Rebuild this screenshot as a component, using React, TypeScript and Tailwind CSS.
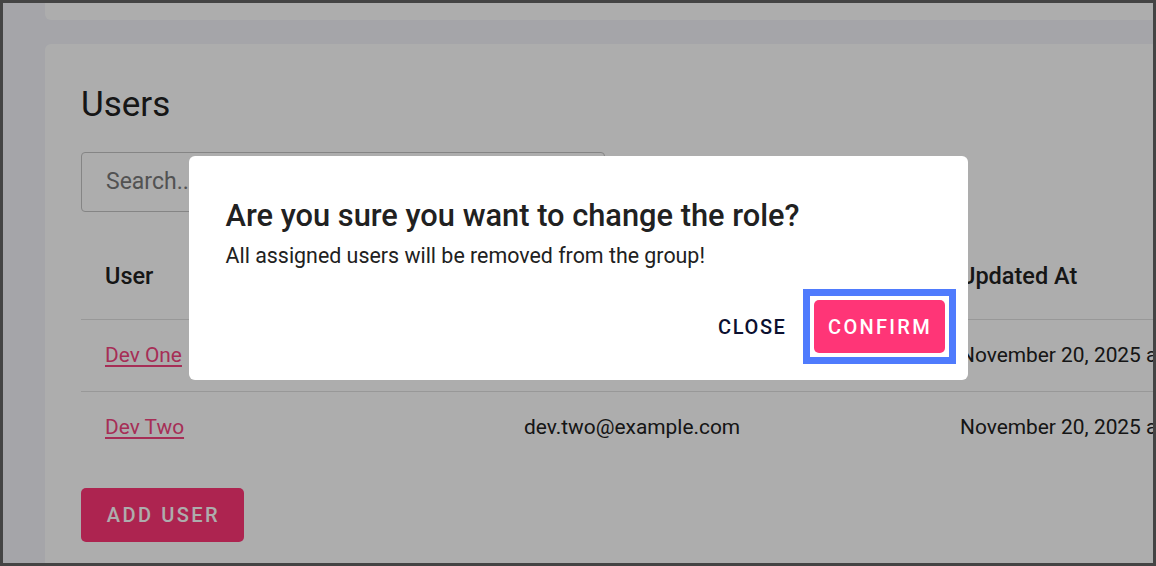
import React from "react";

export default function App() {
  return (
    <div className="relative w-[1156px] h-[566px] overflow-hidden border-[3px] border-[#444444] bg-[#f3f4fa] font-['Roboto',sans-serif] text-[#212121]">
      <div className="flex flex-col h-full pl-[42px]">
        <div className="h-[17px] shrink-0 bg-white rounded-bl-[6px]" />
        <div className="mt-[24px] flex-1 bg-white rounded-tl-[6px] pl-[36px] pt-[39px]">
          <h1 className="text-[35px] leading-[43px] font-normal">Users</h1>
          <div className="mt-[26px] w-[524px] h-[60px] rounded-[4px] border border-[#c4c4c4] flex items-center">
            <input
              className="w-full bg-transparent outline-none pl-[24px] text-[23px] placeholder:text-[#7a7a7a]"
              placeholder="Search..."
            />
          </div>
          <div className="mt-[23px] w-[1400px]">
            <div className="grid grid-cols-[419px_437px_544px] h-[85px] items-center border-b border-[#e0e0e0] text-[23.5px] font-medium">
              <div className="pl-[24px]">User</div>
              <div className="pl-[24px]">Email</div>
              <div className="pl-[23px]">Updated At</div>
            </div>
            <div className="grid grid-cols-[419px_437px_544px] h-[72px] items-center border-b border-[#e0e0e0] text-[20.9px]">
              <div className="pl-[24px]">
                <a className="text-[#f5457f] underline decoration-[1.5px] underline-offset-[3px]" href="#">Dev One</a>
              </div>
              <div className="pl-[24px]">dev.one@example.com</div>
              <div className="pl-[23px] whitespace-nowrap">November 20, 2025 at 10:15 AM</div>
            </div>
            <div className="grid grid-cols-[419px_437px_544px] h-[71px] items-center text-[20.9px]">
              <div className="pl-[24px]">
                <a className="text-[#f5457f] underline decoration-[1.5px] underline-offset-[3px]" href="#">Dev Two</a>
              </div>
              <div className="pl-[24px]">dev.two@example.com</div>
              <div className="pl-[23px] whitespace-nowrap">November 20, 2025 at 10:15 AM</div>
            </div>
          </div>
          <button className="mt-[25px] w-[163px] h-[54px] rounded-[5px] bg-[#ff3577] text-white text-[20px] font-medium tracking-[2.5px] pl-[2px]">
            ADD USER
          </button>
        </div>
      </div>

      <div className="absolute inset-0 bg-black/[0.32]" />

      <div className="absolute left-0 right-0 top-[153px] flex justify-center">
        <div className="w-[779px] h-[224px] bg-white rounded-[6px] pl-[37px] pr-[12px] pt-[41px]">
          <h2 className="text-[30.8px] leading-[38px] font-medium text-[#212121]">
            Are you sure you want to change the role?
          </h2>
          <p className="mt-[7px] text-[21.4px] leading-[28px] text-[#212121]">
            All assigned users will be removed from the group!
          </p>
          <div className="mt-[19px] flex justify-end items-center gap-[16px]">
            <button className="text-[20px] font-medium tracking-[1.6px] text-[#0b1030]">CLOSE</button>
            <div className="border-[7px] border-[#4f7bfd] p-[4px] bg-white">
              <button className="block w-[131px] h-[53px] rounded-[5px] bg-[#ff3577] text-white text-[20px] font-medium tracking-[2.3px] pl-[2px]">
                CONFIRM
              </button>
            </div>
          </div>
        </div>
      </div>
    </div>
  );
}
